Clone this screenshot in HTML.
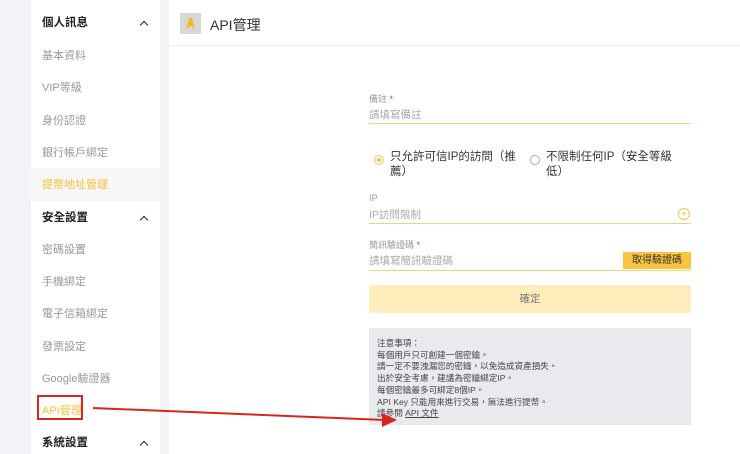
<!DOCTYPE html>
<html><head><meta charset="utf-8"><style>
*{margin:0;padding:0;box-sizing:border-box}
body{width:740px;height:454px;overflow:hidden;background:#f1f3f6;font-family:"Liberation Sans","Noto Sans CJK TC",sans-serif;position:relative}
.side{position:absolute;left:31px;top:0;width:129px;height:454px;background:#fff}
.it{position:absolute;left:11px;font-size:11px;color:#999;line-height:14px}
.hd{color:#222;font-weight:bold;font-size:11.5px}
.car{position:absolute;right:13px;width:6px;height:6px;border-left:1.5px solid #222;border-top:1.5px solid #222;transform:rotate(45deg)}
.main{position:absolute;left:169px;top:0;width:571px;height:454px;background:#fff}
.top{height:46px;border-bottom:1px solid #eceef1;position:relative}
.logo{position:absolute;left:11px;top:13px;width:21px;height:21px;background:#d8d8d8}
.ttl{position:absolute;left:41px;top:15px;font-size:14px;color:#333}
.a{position:absolute;font-size:9px;color:#999}
.line{position:absolute;left:200px;width:322px;height:1px;background:#f5d27a}
.ph{position:absolute;left:200px;font-size:10.5px;color:#aaa}
</style></head><body>
<div class="side">
<div style="position:absolute;left:0;top:168px;width:129px;height:33px;background:#f7f7f8"></div>
<div class="it hd" style="top:16px">個人訊息</div><div class="car" style="top:22px"></div>
<div class="it" style="top:49px">基本資料</div>
<div class="it" style="top:81px">VIP等級</div>
<div class="it" style="top:114px">身份認證</div>
<div class="it" style="top:146px">銀行帳戶綁定</div>
<div class="it" style="top:178px;color:#f7c23a">提幣地址管理</div>
<div class="it hd" style="top:211px">安全設置</div><div class="car" style="top:217px"></div>
<div class="it" style="top:243px">密碼設置</div>
<div class="it" style="top:275px">手機綁定</div>
<div class="it" style="top:307px">電子信箱綁定</div>
<div class="it" style="top:340px">發票設定</div>
<div class="it" style="top:372px">Google驗證器</div>
<div class="it" style="top:404px;color:#f7c23a">API管理</div>
<div class="it hd" style="top:436px">系統設置</div><div class="car" style="top:442px"></div>
</div>
<div class="main">
<div class="top"><div class="logo"><svg width="21" height="21"><path d="M6 17 L9 5 L12 5 L15 17 L12 13 L10 13 Z" fill="#f5b820"/></svg></div><div class="ttl">API管理</div></div>
<div class="a" style="left:200px;top:92px">備註 <span style="color:#e33">*</span></div>
<div class="ph" style="top:107px">請填寫備註</div>
<div class="line" style="top:123px"></div>
<div style="position:absolute;left:205px;top:155px;width:10px;height:10px;border:1px solid #f5c54a;border-radius:50%"><div style="margin:2px;width:4px;height:4px;border-radius:50%;background:#f5c54a"></div></div>
<div style="position:absolute;left:221px;top:150px;font-size:11.5px;color:#333;line-height:15px;white-space:nowrap">只允許可信IP的訪問（推<br>薦）</div>
<div style="position:absolute;left:361px;top:155px;width:10px;height:10px;border:1px solid #aaa;border-radius:50%"></div>
<div style="position:absolute;left:377px;top:150px;font-size:11.5px;color:#333;line-height:15px;white-space:nowrap">不限制任何IP（安全等級<br>低）</div>
<div class="a" style="left:200px;top:193px">IP</div>
<div class="ph" style="top:207px">IP訪問限制</div>
<div style="position:absolute;left:509px;top:208px;width:12px;height:12px;border:1px solid #f5c54a;border-radius:50%;color:#f5c54a;font-size:11px;line-height:10px;text-align:center">+</div>
<div class="line" style="top:223px"></div>
<div class="a" style="left:200px;top:238px">簡訊驗證碼 <span style="color:#e33">*</span></div>
<div class="ph" style="top:253px">請填寫簡訊驗證碼</div>
<div style="position:absolute;left:454px;top:252px;width:68px;height:17px;background:#f7c63e;font-size:10px;color:#333;text-align:center;line-height:17px">取得驗證碼</div>
<div class="line" style="top:270px"></div>
<div style="position:absolute;left:200px;top:285px;width:322px;height:28px;background:#fdeebb;border-radius:2px;text-align:center;line-height:28px;font-size:10.5px;color:#777">確定</div>
<div style="position:absolute;left:200px;top:328px;width:322px;height:97px;background:#e9eaee;padding:10px 0 0 8px;font-size:8.6px;line-height:11.7px;color:#444">注意事項：<br>每個用戶只可創建一個密鑰。<br>請一定不要洩漏您的密鑰，以免造成資產損失。<br>出於安全考慮，建議為密鑰綁定IP。<br>每個密鑰最多可綁定8個IP。<br>API Key 只能用來進行交易，無法進行提幣。<br>請參閱 <u>API 文件</u></div>
</div>
<div style="position:absolute;left:37px;top:395px;width:46px;height:25px;border:2px solid #d9251c"></div>
<svg style="position:absolute;left:0;top:0" width="740" height="454"><line x1="93" y1="408" x2="385" y2="420" stroke="#d9251c" stroke-width="2"/><path d="M397 420 L382 413 L382 427 Z" fill="#d9251c"/></svg>
</body></html>
